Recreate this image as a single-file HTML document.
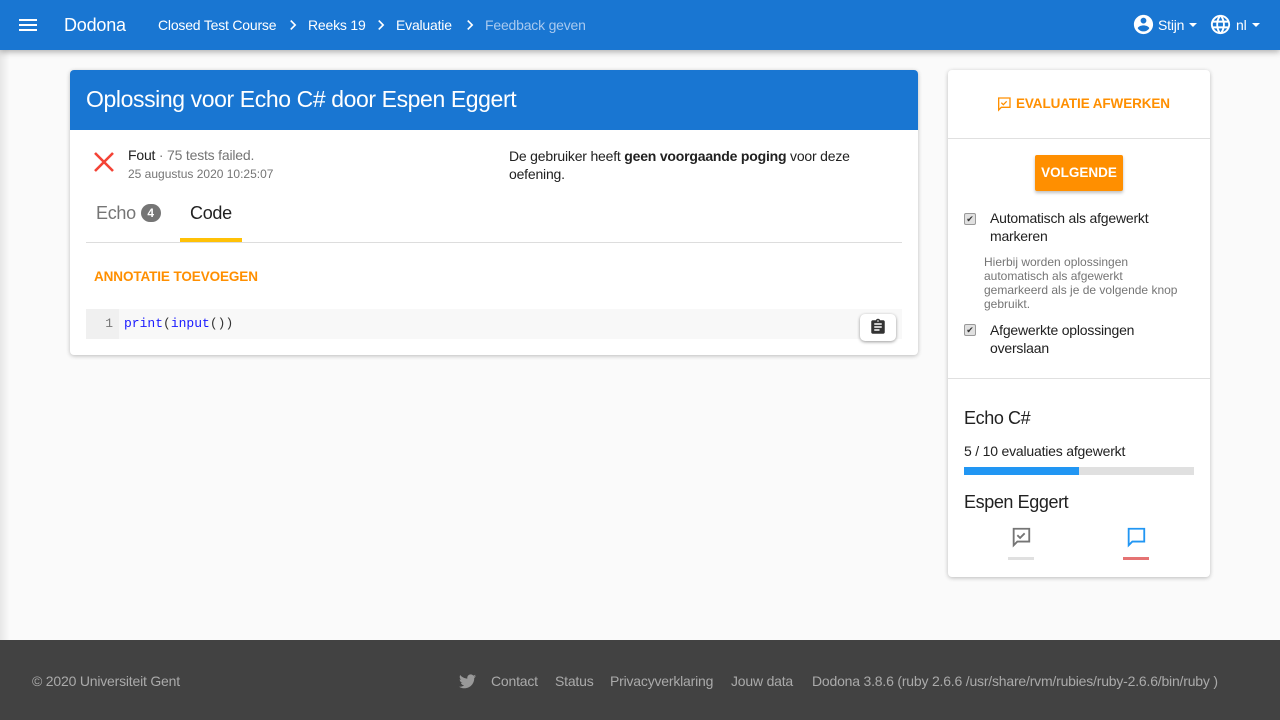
<!DOCTYPE html>
<html><head><meta charset="utf-8"><style>
*{box-sizing:border-box;margin:0;padding:0}
body{width:1280px;height:720px;overflow:hidden;background:#fafafa;font-family:"Liberation Sans",Roboto,sans-serif;color:#212121;position:relative}
.nav{position:absolute;left:0;top:0;width:1280px;height:50px;background:#1976d2;color:#fff;box-shadow:0 2px 6px rgba(0,0,0,.3);z-index:2}
.nav .t{position:absolute;top:0;line-height:50px;font-size:14px;letter-spacing:-.2px}
.card{position:absolute;background:#fff;border-radius:4px;box-shadow:0 1px 4px rgba(0,0,0,.25)}
.or{color:#ff8f00;font-weight:bold;font-size:13.5px;letter-spacing:-.1px}
.small{font-size:12px;color:#757575}
.foot{position:absolute;left:0;top:640px;width:1280px;height:80px;background:#424242;color:#aaa;font-size:14px;letter-spacing:-.2px}
.foot span{position:absolute;top:33px}
.cb{position:absolute;width:12px;height:12px;border:1px solid #999;border-radius:2px;background:#e0e0e0;font-size:9px;line-height:10px;text-align:center;color:#333}
</style></head><body>
<div style="position:absolute;left:0;top:50px;width:10px;height:590px;background:linear-gradient(90deg,rgba(0,0,0,.08),rgba(0,0,0,0))"></div>
<div class="nav">
<svg style="position:absolute;left:16px;top:13px" width="24" height="24" viewBox="0 0 24 24"><path fill="#fff" d="M3 18h18v-2H3v2zm0-5h18v-2H3v2zm0-7v2h18V6H3z"/></svg>
<span class="t" style="left:64px;font-size:18px">Dodona</span>
<span class="t" style="left:158px">Closed Test Course</span>
<svg style="position:absolute;left:283px;top:15px" width="20" height="20" viewBox="0 0 24 24"><path fill="#fff" d="M10 6L8.6 7.4 13.2 12l-4.6 4.6L10 18l6-6z"/></svg>
<span class="t" style="left:308px">Reeks 19</span>
<svg style="position:absolute;left:371px;top:15px" width="20" height="20" viewBox="0 0 24 24"><path fill="#fff" d="M10 6L8.6 7.4 13.2 12l-4.6 4.6L10 18l6-6z"/></svg>
<span class="t" style="left:396px">Evaluatie</span>
<svg style="position:absolute;left:460px;top:15px" width="20" height="20" viewBox="0 0 24 24"><path fill="#fff" d="M10 6L8.6 7.4 13.2 12l-4.6 4.6L10 18l6-6z"/></svg>
<span class="t" style="left:485px;color:#a8c9ef">Feedback geven</span>
<svg style="position:absolute;left:1132px;top:13px" width="23" height="23" viewBox="0 0 24 24"><path fill="#fff" d="M12 2C6.5 2 2 6.5 2 12s4.5 10 10 10 10-4.5 10-10S17.5 2 12 2zm0 3c1.7 0 3 1.3 3 3s-1.3 3-3 3-3-1.3-3-3 1.3-3 3-3zm0 14.2c-2.5 0-4.7-1.3-6-3.2 0-2 4-3.1 6-3.1s6 1.1 6 3.1c-1.3 1.9-3.5 3.2-6 3.2z"/></svg>
<span class="t" style="left:1158px">Stijn</span>
<svg style="position:absolute;left:1188px;top:20px" width="10" height="10" viewBox="0 0 10 10"><path fill="#fff" d="M1 3h8L5 7z"/></svg>
<svg style="position:absolute;left:1209px;top:13px" width="23" height="23" viewBox="0 0 24 24"><path fill="#fff" d="M12 2C6.5 2 2 6.5 2 12s4.5 10 10 10 10-4.5 10-10S17.5 2 12 2zm6.9 6h-2.9c-.3-1.3-.8-2.5-1.4-3.6 1.8.6 3.4 1.9 4.3 3.6zM12 4c.8 1.2 1.5 2.5 1.9 4h-3.8c.4-1.4 1.1-2.8 1.9-4zM4.3 14C4.1 13.400 4 12.7 4 12s.1-1.4.3-2h3.4c-.1.7-.1 1.3-.1 2s.1 1.3.1 2H4.3zm.8 2h2.9c.3 1.3.8 2.5 1.4 3.6-1.8-.6-3.4-1.9-4.3-3.6zm2.9-8H5.1c1-1.7 2.5-3 4.3-3.6C8.8 5.5 8.4 6.7 8 8zm4 12c-.8-1.2-1.5-2.5-1.9-4h3.8c-.4 1.4-1.1 2.8-1.9 4zm2.3-6H9.7c-.1-.7-.2-1.3-.2-2s.1-1.3.2-2h4.7c.1.7.2 1.3.2 2s-.1 1.3-.2 2zm.3 5.6c.6-1.1 1.100-2.3 1.4-3.6h2.9c-1 1.7-2.5 3-4.3 3.6zM16.4 14c.1-.7.1-1.3.1-2s-.1-1.3-.1-2h3.4c.2.6.3 1.3.3 2s-.1 1.4-.3 2h-3.4z"/></svg>
<span class="t" style="left:1236px">nl</span>
<svg style="position:absolute;left:1251px;top:20px" width="10" height="10" viewBox="0 0 10 10"><path fill="#fff" d="M1 3h8L5 7z"/></svg>
</div>

<div class="card" style="left:70px;top:70px;width:848px;height:285px;overflow:hidden">
<div style="height:60px;background:#1976d2;color:#fff;font-size:23px;letter-spacing:-.4px;padding:16px 16px">Oplossing voor Echo C# door Espen Eggert</div>
<svg style="position:absolute;left:22px;top:80px" width="24" height="24" viewBox="0 0 24 24"><path stroke="#f44336" stroke-width="2.6" d="M3 3l18 18M21 3L3 21"/></svg>
<div style="position:absolute;left:58px;top:77px;font-size:14px;letter-spacing:-.2px">Fout <span style="color:#757575">· 75 tests failed.</span></div>
<div class="small" style="position:absolute;left:58px;top:97px">25 augustus 2020 10:25:07</div>
<div style="position:absolute;left:439px;top:77px;font-size:14px;line-height:18px;width:380px;letter-spacing:-.2px">De gebruiker heeft <b>geen voorgaande poging</b> voor deze oefening.</div>
<div style="position:absolute;left:26px;top:133px;font-size:18px;color:#757575;letter-spacing:-.3px">Echo <span style="display:inline-block;background:#757575;color:#fff;font-size:12px;font-weight:bold;border-radius:9px;width:20px;height:18px;line-height:18px;text-align:center;vertical-align:2px">4</span></div>
<div style="position:absolute;left:120px;top:133px;font-size:18px;letter-spacing:-.3px">Code</div>
<div style="position:absolute;left:110px;top:168px;width:62px;height:4px;background:#ffc107"></div>
<div style="position:absolute;left:16px;top:172px;width:816px;height:1px;background:#ddd"></div>
<div class="or" style="position:absolute;left:24px;top:199px">ANNOTATIE TOEVOEGEN</div>
<div style="position:absolute;left:16px;top:239px;width:816px;height:30px;background:#f8f8f8"></div>
<div style="position:absolute;left:16px;top:239px;width:33px;height:30px;background:#f0f0f0;color:#777;font:13px 'Liberation Mono',monospace;text-align:right;padding:7px 6px 0 0">1</div>
<div style="position:absolute;left:54px;top:246px;font:13px 'Liberation Mono',monospace;color:#333"><span style="color:#1a1aff">print</span>(<span style="color:#1a1aff">input</span>())</div>
<div style="position:absolute;left:790px;top:244px;width:36px;height:27px;background:#fff;border-radius:5px;box-shadow:0 1px 3px rgba(0,0,0,.4)"><svg style="position:absolute;left:9px;top:4px" width="18" height="18" viewBox="0 0 24 24"><path fill="#333" d="M19 3h-4.2C14.4 1.8 13.3 1 12 1s-2.4.8-2.8 2H5c-1.1 0-2 .9-2 2v14c0 1.1.9 2 2 2h14c1.1 0 2-.9 2-2V5c0-1.1-.9-2-2-2zm-7 0c.6 0 1 .4 1 1s-.4 1-1 1-1-.4-1-1 .4-1 1-1zm2 14H7v-2h7v2zm3-4H7v-2h10v2zm0-4H7V7h10v2z"/></svg></div>
</div>

<div class="card" style="left:948px;top:70px;width:262px;height:507px">
<svg style="position:absolute;left:48px;top:26px" width="16" height="16" viewBox="0 0 24 24"><path fill="none" stroke="#ff8f00" stroke-width="2" d="M3 3h18v14H8l-4 4V3z"/><path fill="none" stroke="#ff8f00" stroke-width="2" d="M8 10l3 3 5-5"/></svg>
<div class="or" style="position:absolute;left:68px;top:26px">EVALUATIE AFWERKEN</div>
<div style="position:absolute;left:0;top:68px;width:262px;height:1px;background:#e0e0e0"></div>
<div style="position:absolute;left:87px;top:85px;width:88px;height:36px;background:#ff8f00;color:#fff;font-weight:bold;font-size:13.5px;text-align:center;line-height:36px;border-radius:2px;box-shadow:0 2px 3px rgba(0,0,0,.25)">VOLGENDE</div>
<div class="cb" style="left:16px;top:143px">✔</div>
<div style="position:absolute;left:42px;top:139px;font-size:14px;line-height:18px;width:200px;letter-spacing:-.2px">Automatisch als afgewerkt markeren</div>
<div style="position:absolute;left:36px;top:185px;font-size:12px;line-height:14px;color:#757575;width:205px">Hierbij worden oplossingen automatisch als afgewerkt gemarkeerd als je de volgende knop gebruikt.</div>
<div class="cb" style="left:16px;top:254px">✔</div>
<div style="position:absolute;left:42px;top:251px;font-size:14px;line-height:18px;width:200px;letter-spacing:-.2px">Afgewerkte oplossingen overslaan</div>
<div style="position:absolute;left:0;top:308px;width:262px;height:1px;background:#e0e0e0"></div>
<div style="position:absolute;left:16px;top:338px;font-size:18px;letter-spacing:-.4px">Echo C#</div>
<div style="position:absolute;left:16px;top:373px;font-size:14px;letter-spacing:-.2px">5 / 10 evaluaties afgewerkt</div>
<div style="position:absolute;left:16px;top:397px;width:230px;height:8px;background:#e0e0e0"><div style="width:115px;height:8px;background:#2196f3"></div></div>
<div style="position:absolute;left:16px;top:422px;font-size:18px;letter-spacing:-.4px">Espen Eggert</div>
<svg style="position:absolute;left:62px;top:456px" width="22" height="22" viewBox="0 0 24 24"><path fill="none" stroke="#757575" stroke-width="2" d="M3 3h18v14H8l-4 4V3z"/><path fill="none" stroke="#757575" stroke-width="2" d="M8 10l3 3 5-5"/></svg>
<div style="position:absolute;left:60px;top:487px;width:26px;height:3px;background:#e0e0e0"></div>
<svg style="position:absolute;left:177px;top:456px" width="22" height="22" viewBox="0 0 24 24"><path fill="none" stroke="#2196f3" stroke-width="2" d="M3 3h18v14H8l-4 4V3z"/></svg>
<div style="position:absolute;left:175px;top:487px;width:26px;height:3px;background:#e57373"></div>
</div>

<div class="foot">
<span style="left:32px">© 2020 Universiteit Gent</span>
<svg style="position:absolute;left:459px;top:34px" width="17" height="15" viewBox="0 0 24 20"><path fill="#999" d="M24 2.4c-.9.4-1.8.7-2.8.8 1-.6 1.8-1.6 2.2-2.7-1 .6-2 1-3.1 1.2C19.3.7 18 0 16.6 0c-2.7 0-4.9 2.2-4.9 4.9 0 .4 0 .8.1 1.1C7.7 5.8 4.1 3.9 1.7.9c-.4.7-.7 1.6-.7 2.500 0 1.7.9 3.2 2.2 4.1-.8 0-1.600-.2-2.2-.6v.1c0 2.4 1.7 4.4 3.900 4.8-.4.1-.8.2-1.3.2-.3 0-.6 0-.9-.1.6 2 2.4 3.4 4.6 3.4-1.7 1.3-3.8 2.1-6.1 2.1H0c2.2 1.4 4.8 2.2 7.5 2.2 9.1 0 14-7.5 14-14v-.6c1-.7 1.8-1.6 2.5-2.6z"/></svg>
<span style="left:491px">Contact</span>
<span style="left:555px">Status</span>
<span style="left:610px">Privacyverklaring</span>
<span style="left:731px">Jouw data</span>
<span style="left:812px">Dodona 3.8.6 (ruby 2.6.6 /usr/share/rvm/rubies/ruby-2.6.6/bin/ruby )</span>
</div>
</body></html>
